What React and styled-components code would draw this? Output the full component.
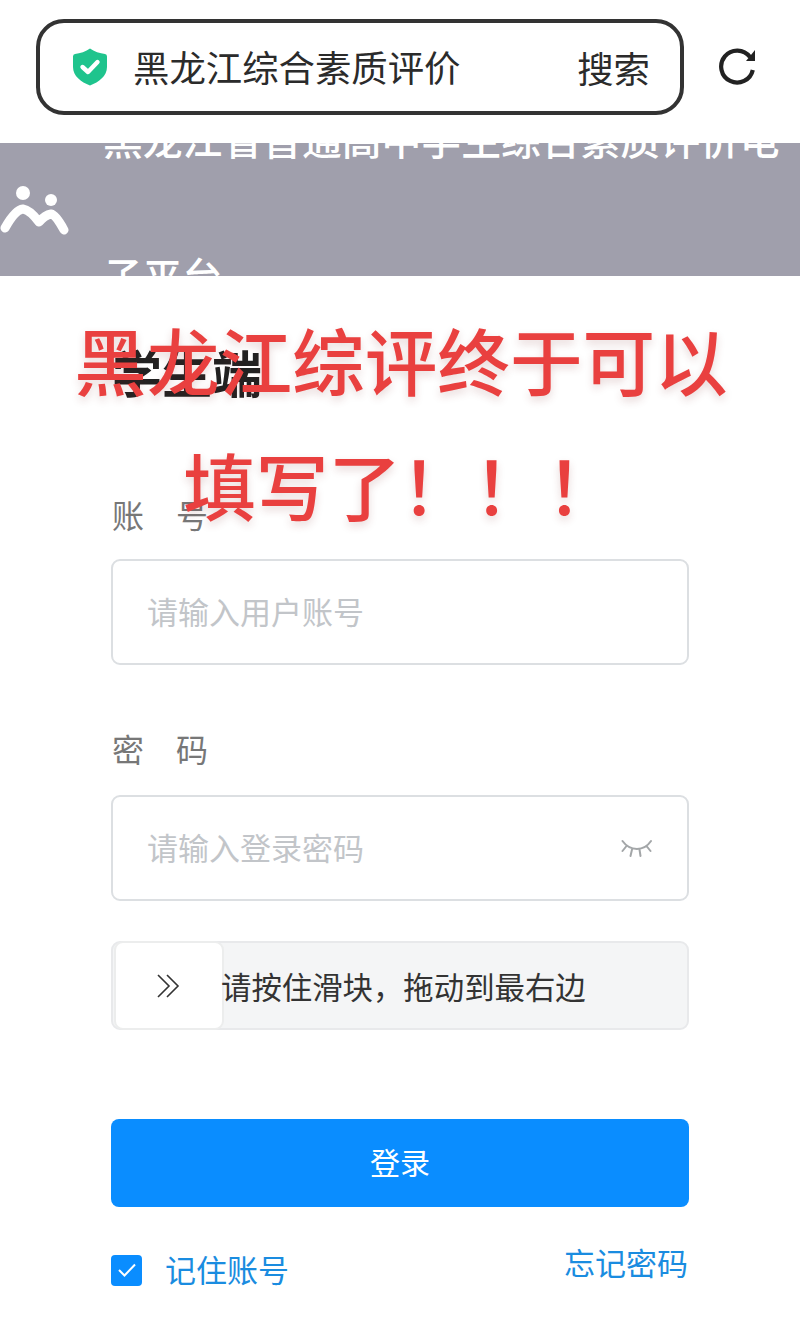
import React from 'react';
import styled, { createGlobalStyle } from 'styled-components';

const GlobalStyle = createGlobalStyle`
  * { box-sizing: border-box; }
  html, body { margin: 0; padding: 0; background: #fff; }
  body { font-family: "Noto Sans CJK SC", "Noto Sans", sans-serif; }
`;

const Page = styled.div`
  position: relative;
  width: 800px;
  height: 1338px;
  overflow: hidden;
  background: #fff;
`;

const TopBar = styled.div`
  display: flex;
  align-items: center;
  height: 143px;
  padding: 19px 0 28px 36px;
  gap: 35px;
`;

const SearchBox = styled.div`
  display: flex;
  flex: none;
  align-items: center;
  width: 648px;
  height: 96px;
  padding: 0 30px 0 32px;
  border: 4px solid #333;
  border-radius: 28px;
  color: #2b2b2b;
  font-size: 36.4px;
`;

const Query = styled.span`
  flex: 1;
  margin-left: 25px;
  padding-bottom: 2px;
  white-space: nowrap;
`;

const Banner = styled.div`
  display: flex;
  align-items: center;
  height: 133px;
  background: #a09fac;
  overflow: hidden;
`;

const BannerLogo = styled.svg`
  flex: none;
  width: 72px;
  height: 50px;
  margin-right: 31px;
`;

const BannerTitle = styled.div`
  flex: 1;
  padding-bottom: 7px;
  color: #fff;
  font-size: 39.8px;
  font-weight: 500;
  line-height: 137px;
`;

const Form = styled.div`
  padding: 65px 111px 0;
`;

const Title = styled.h1`
  margin: 0 0 0 1px;
  color: #222;
  font-size: 50px;
  font-weight: 700;
  line-height: 60px;
`;

const FieldLabel = styled.div`
  margin: ${(p) => p.$top}px 0 ${(p) => p.$bottom}px 1px;
  color: #777;
  font-size: 32px;
  line-height: 48px;
`;

const InputBox = styled.div`
  display: flex;
  align-items: center;
  justify-content: space-between;
  height: 106px;
  padding: 0 34px 0 34px;
  border: 2px solid #dcdfe2;
  border-radius: 9px;
`;

const Placeholder = styled.span`
  padding-bottom: 4px;
  color: #c2c5c9;
  font-size: 31px;
`;

const Slider = styled.div`
  display: flex;
  align-items: center;
  height: 89px;
  margin-top: 40px;
  border: 2px solid #e8e9eb;
  border-radius: 9px;
  background: #f4f5f6;
`;

const SliderHandle = styled.div`
  display: flex;
  flex: none;
  align-items: center;
  justify-content: center;
  width: 110px;
  height: 89px;
  margin: 0 -3px 0 1px;
  border: 2px solid #eceded;
  border-radius: 9px;
  background: #fff;
`;

const SliderText = styled.span`
  color: #333;
  font-size: 30.4px;
  white-space: nowrap;
`;

const LoginButton = styled.button`
  display: block;
  width: 100%;
  height: 88px;
  margin-top: 89px;
  padding: 0 0 4px;
  border: 0;
  border-radius: 8px;
  background: #0a8dff;
  color: #fff;
  font-family: inherit;
  font-size: 30px;
`;

const Options = styled.div`
  display: flex;
  align-items: flex-start;
  justify-content: space-between;
  margin-top: 34px;
  color: #1a8ce0;
  font-size: 31px;
  line-height: 44px;
`;

const Remember = styled.div`
  display: flex;
  align-items: center;
  gap: 23px;
  padding-top: 6px;
`;

const ForgotLink = styled.span`
  margin-top: -1px;
  margin-right: 1px;
`;

const Checkbox = styled.span`
  display: flex;
  align-items: center;
  justify-content: center;
  width: 31px;
  height: 31px;
  margin-top: 2px;
  border-radius: 4px;
  background: #0a8dff;
`;

const Overlay = styled.div`
  position: absolute;
  top: 296px;
  left: 0;
  width: 800px;
  padding-left: 2px;
  color: #e9403f;
  font-size: 72.6px;
  font-weight: 500;
  line-height: 125px;
  text-align: center;
  text-shadow: 0 4px 8px rgba(120, 40, 40, 0.18);
`;

const App = () => {
  return (
    <Page>
      <GlobalStyle />
      <TopBar>
        <SearchBox>
          <svg width="36" height="38" viewBox="0 0 36 38">
            <path d="M18 0.5 C22 3.5 28 5.5 33 6 Q35 6.2 35 8.5 V19 C35 28 27 34 18 37.5 C9 34 1 28 1 19 V8.5 Q1 6.2 3 6 C8 5.5 14 3.5 18 0.5 Z" fill="#1fc48d" />
            <path d="M10.5 19 L16 24 L25.5 14" fill="none" stroke="#fff" strokeWidth="4.4" strokeLinecap="round" strokeLinejoin="round" />
          </svg>
          <Query>黑龙江综合素质评价</Query>
          <span>搜索</span>
        </SearchBox>
        <svg width="38" height="40" viewBox="0 0 38 40">
          <path d="M33.8 23 A16 16 0 1 1 31 10" fill="none" stroke="#222" strokeWidth="4.2" />
          <path d="M36 3 V14 H27 Z" fill="#222" />
        </svg>
      </TopBar>
      <Banner>
        <BannerLogo viewBox="0 0 72 50">
          <circle cx="23" cy="8" r="7" fill="#fff" />
          <circle cx="51" cy="15" r="6" fill="#fff" />
          <path d="M5 43 Q15 25 23 24 Q30 25 39 37 Q45 30 51 29 Q56 30 64 45" fill="none" stroke="#fff" strokeWidth="9" strokeLinecap="round" strokeLinejoin="round" />
        </BannerLogo>
        <BannerTitle>黑龙江省普通高中学生综合素质评价电子平台</BannerTitle>
      </Banner>
      <Form>
        <Title>学生端</Title>
        <FieldLabel $top={89} $bottom={21}>账　号</FieldLabel>
        <InputBox>
          <Placeholder>请输入用户账号</Placeholder>
        </InputBox>
        <FieldLabel $top={59} $bottom={23}>密　码</FieldLabel>
        <InputBox>
          <Placeholder>请输入登录密码</Placeholder>
          <svg width="32" height="18" viewBox="0 0 32 18">
            <path d="M1.5 2 C9 12.5 23 12.5 30 2 M1.5 12 L5.5 7 M9.5 17 L11 10.5 M19.5 17 L18.5 10.5 M29.5 12 L25.5 7" fill="none" stroke="#a3a6a8" strokeWidth="2" strokeLinecap="round" />
          </svg>
        </InputBox>
        <Slider>
          <SliderHandle>
            <svg width="24" height="24" viewBox="0 0 24 24">
              <path d="M1 1 L12 12 L1 23 M10 1 L21 12 L10 23" fill="none" stroke="#333" strokeWidth="1.6" />
            </svg>
          </SliderHandle>
          <SliderText>请按住滑块，拖动到最右边</SliderText>
        </Slider>
        <LoginButton>登录</LoginButton>
        <Options>
          <Remember>
            <Checkbox>
              <svg width="20" height="16" viewBox="0 0 20 16">
                <path d="M2 8 L7.5 13.5 L18 2.5" fill="none" stroke="#fff" strokeWidth="2" />
              </svg>
            </Checkbox>
            记住账号
          </Remember>
          <ForgotLink>忘记密码</ForgotLink>
        </Options>
      </Form>
      <Overlay>
        黑龙江综评终于可以
        <br />
        填写了！！！
      </Overlay>
    </Page>
  );
};

export default App;
